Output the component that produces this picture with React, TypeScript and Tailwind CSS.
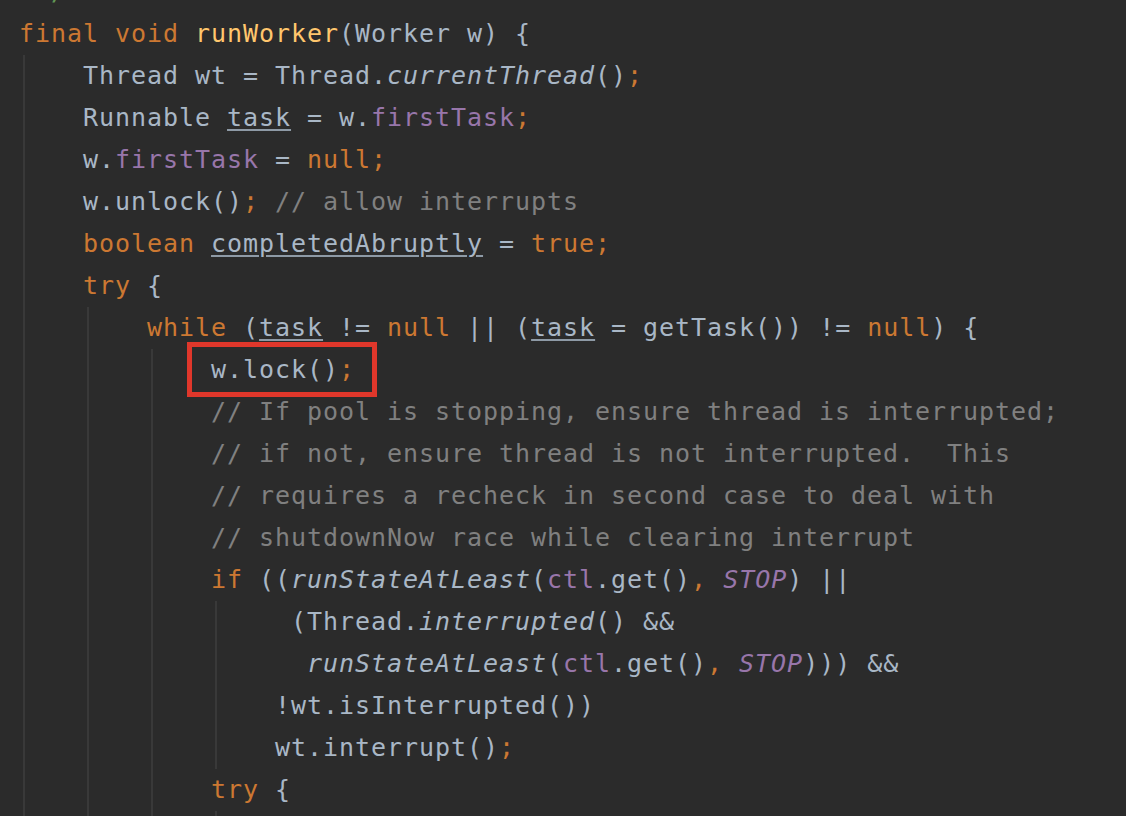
import React from "react";

const K = ({ children }: { children: React.ReactNode }) => <span className="text-[#cc7832]">{children}</span>;
const F = ({ children }: { children: React.ReactNode }) => <span className="text-[#9876aa]">{children}</span>;
const FI = ({ children }: { children: React.ReactNode }) => <span className="text-[#9876aa] italic">{children}</span>;
const C = ({ children }: { children: React.ReactNode }) => <span className="text-[#808080]">{children}</span>;
const I = ({ children }: { children: React.ReactNode }) => <span className="italic">{children}</span>;
const U = ({ children }: { children: React.ReactNode }) => (
  <span className="underline decoration-2 underline-offset-[3px] decoration-[#8e9aa6]">{children}</span>
);
const M = ({ children }: { children: React.ReactNode }) => <span className="text-[#ffc66d]">{children}</span>;

const Line = ({ children, className = "" }: { children?: React.ReactNode; className?: string }) => (
  <div className={"h-[42px] leading-[42px] whitespace-pre " + className}>{children}</div>
);

const Block = ({ children }: { children: React.ReactNode }) => (
  <div className="ml-[4px] border-l-2 border-[#393939] pl-[58px]">{children}</div>
);

export default function App() {
  return (
    <div className="w-[1126px] h-[816px] overflow-hidden bg-[#2b2b2b] text-[#a9b7c6] font-['DejaVu_Sans_Mono',monospace] text-[25px] tracking-[0.95px]">
      <div className="-mt-[29px] pl-[19px]">
        <Line>
          <span className="text-[#629755]"> */</span>
        </Line>
        <Line>
          <K>final void </K>
          <M>runWorker</M>(Worker w) {"{"}
        </Line>
        <Block>
          <Line>
            Thread wt = Thread.<I>currentThread</I>()<K>;</K>
          </Line>
          <Line>
            Runnable <U>task</U> = w.<F>firstTask</F>
            <K>;</K>
          </Line>
          <Line>
            w.<F>firstTask</F> = <K>null;</K>
          </Line>
          <Line>
            w.unlock()<K>;</K> <C>// allow interrupts</C>
          </Line>
          <Line>
            <K>boolean </K>
            <U>completedAbruptly</U> = <K>true;</K>
          </Line>
          <Line>
            <K>try </K>
            {"{"}
          </Line>
          <Block>
            <Line>
              <K>while </K>(<U>task</U> != <K>null</K> || (<U>task</U> = getTask()) != <K>null</K>) {"{"}
            </Line>
            <Block>
              <Line className="relative">
                <span className="absolute left-[-24px] top-[-7px] w-[190px] h-[55px] border-[5px] border-[#e0372b]" />
                w.lock()<K>;</K>
              </Line>
              <Line>
                <C>// If pool is stopping, ensure thread is interrupted;</C>
              </Line>
              <Line>
                <C>// if not, ensure thread is not interrupted.  This</C>
              </Line>
              <Line>
                <C>// requires a recheck in second case to deal with</C>
              </Line>
              <Line>
                <C>// shutdownNow race while clearing interrupt</C>
              </Line>
              <Line>
                <K>if </K>((<I>runStateAtLeast</I>(<F>ctl</F>.get()<K>, </K>
                <FI>STOP</FI>) ||
              </Line>
              <Block>
                <Line>
                  {" "}(Thread.<I>interrupted</I>() &amp;&amp;
                </Line>
                <Line>
                  {"  "}
                  <I>runStateAtLeast</I>(<F>ctl</F>.get()<K>, </K>
                  <FI>STOP</FI>))) &amp;&amp;
                </Line>
                <Line>!wt.isInterrupted())</Line>
                <Line>
                  wt.interrupt()<K>;</K>
                </Line>
              </Block>
              <Line>
                <K>try </K>
                {"{"}
              </Line>
              <Block>
                <Line />
              </Block>
            </Block>
          </Block>
        </Block>
      </div>
    </div>
  );
}
